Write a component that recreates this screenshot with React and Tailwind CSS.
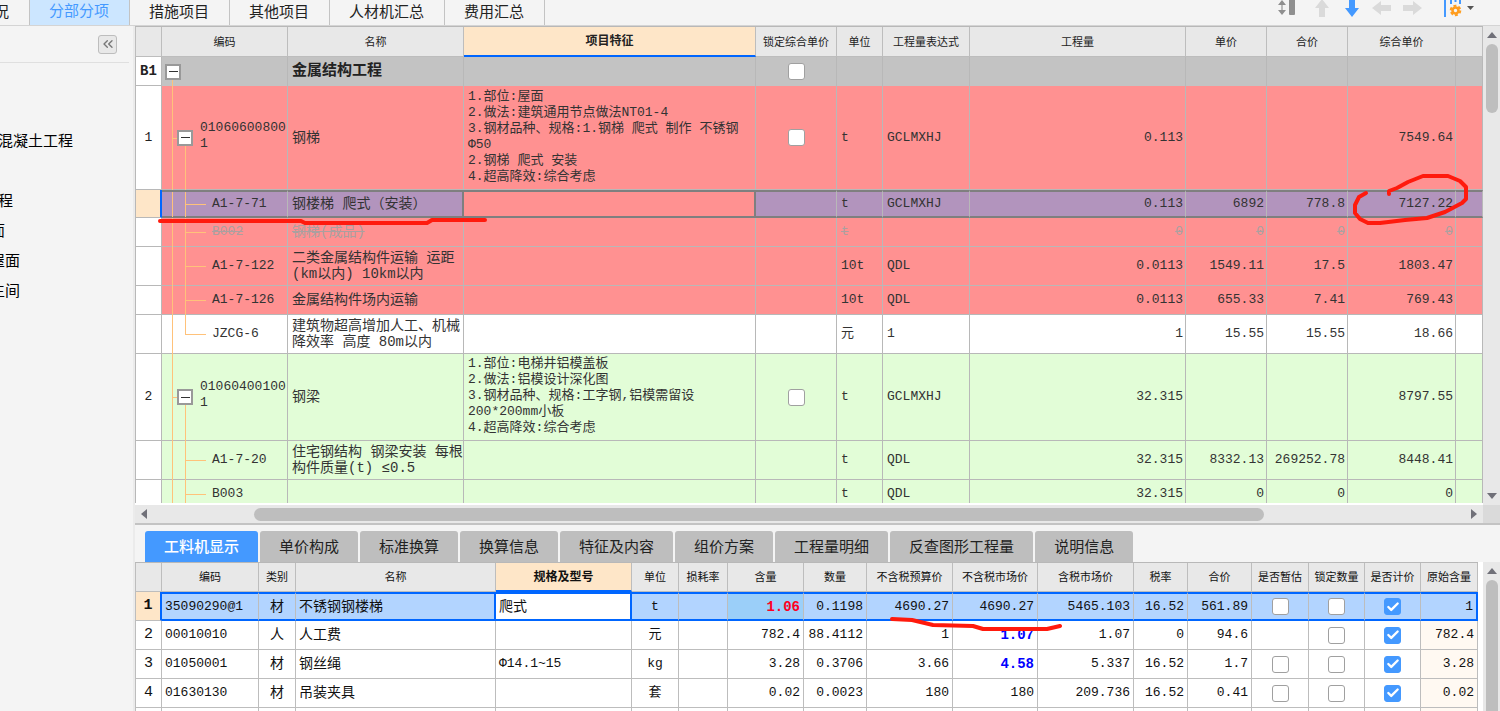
/**
 * Bill of quantities editor
 * Item grid on top, labour / material / machine detail grid below
 */

import React, { useState } from 'react';
import { Check, ChevronsLeft } from 'lucide-react';

const topTabs = ['分部分项', '措施项目', '其他项目', '人材机汇总', '费用汇总'];

const detailTabs = [
  '工料机显示',
  '单价构成',
  '标准换算',
  '换算信息',
  '特征及内容',
  '组价方案',
  '工程量明细',
  '反查图形工程量',
  '说明信息',
];

const navItems = [
  { label: '混凝土工程', indent: '-ml-0.5' },
  { label: '', indent: '' },
  { label: '程', indent: '-ml-0.5' },
  { label: '面', indent: '-ml-2.5' },
  { label: '屋面', indent: '-ml-2.5' },
  { label: '生间', indent: '-ml-2.5' },
];

const itemColumns = [
  { label: '', width: 'w-[27px]' },
  { label: '编码', width: 'w-[126px]' },
  { label: '名称', width: 'w-[176px]' },
  { label: '项目特征', width: 'w-[292px]', active: true },
  { label: '锁定综合单价', width: 'w-[81px]' },
  { label: '单位', width: 'w-[46px]' },
  { label: '工程量表达式', width: 'w-[87px]' },
  { label: '工程量', width: '' },
  { label: '单价', width: 'w-[81px]' },
  { label: '合价', width: 'w-[81px]' },
  { label: '综合单价', width: 'w-[108px]' },
  { label: '', width: 'w-[27px]' },
];

const items = [
  {
    no: '1',
    kind: 'item',
    tone: 'pink',
    height: 'h-[104px]',
    code: '010606008001',
    name: '钢梯',
    feature:
      '1.部位:屋面\n2.做法:建筑通用节点做法NT01-4\n3.钢材品种、规格:1.钢梯 爬式 制作 不锈钢\nΦ50\n2.钢梯 爬式 安装\n4.超高降效:综合考虑',
    unit: 't',
    expr: 'GCLMXHJ',
    qty: '0.113',
    total: '7549.64',
  },
  {
    kind: 'sub',
    tone: 'pink',
    selected: true,
    height: 'h-[28px]',
    code: 'A1-7-71',
    name: '钢楼梯 爬式（安装）',
    unit: 't',
    expr: 'GCLMXHJ',
    qty: '0.113',
    price: '6892',
    sum: '778.8',
    total: '7127.22',
  },
  {
    kind: 'sub',
    tone: 'pink',
    removed: true,
    height: 'h-[29px]',
    code: 'B002',
    name: '钢梯(成品)',
    unit: 't',
    qty: '0',
    price: '0',
    sum: '0',
    total: '0',
  },
  {
    kind: 'sub',
    tone: 'pink',
    height: 'h-[39px]',
    code: 'A1-7-122',
    name: '二类金属结构件运输 运距\n(km以内) 10km以内',
    unit: '10t',
    expr: 'QDL',
    qty: '0.0113',
    price: '1549.11',
    sum: '17.5',
    total: '1803.47',
  },
  {
    kind: 'sub',
    tone: 'pink',
    height: 'h-[29px]',
    code: 'A1-7-126',
    name: '金属结构件场内运输',
    unit: '10t',
    expr: 'QDL',
    qty: '0.0113',
    price: '655.33',
    sum: '7.41',
    total: '769.43',
  },
  {
    kind: 'sub',
    tone: 'white',
    last: true,
    height: 'h-[39px]',
    code: 'JZCG-6',
    name: '建筑物超高增加人工、机械\n降效率 高度 80m以内',
    unit: '元',
    expr: '1',
    qty: '1',
    price: '15.55',
    sum: '15.55',
    total: '18.66',
  },
  {
    no: '2',
    kind: 'item',
    tone: 'green',
    height: 'h-[87px]',
    code: '010604001001',
    name: '钢梁',
    feature:
      '1.部位:电梯井铝模盖板\n2.做法:铝模设计深化图\n3.钢材品种、规格:工字钢,铝模需留设\n200*200mm小板\n4.超高降效:综合考虑',
    unit: 't',
    expr: 'GCLMXHJ',
    qty: '32.315',
    total: '8797.55',
  },
  {
    kind: 'sub',
    tone: 'green',
    height: 'h-[39px]',
    code: 'A1-7-20',
    name: '住宅钢结构 钢梁安装 每根\n构件质量(t) ≤0.5',
    unit: 't',
    expr: 'QDL',
    qty: '32.315',
    price: '8332.13',
    sum: '269252.78',
    total: '8448.41',
  },
  {
    kind: 'sub',
    tone: 'green',
    height: 'h-[29px]',
    code: 'B003',
    name: '',
    unit: 't',
    expr: 'QDL',
    qty: '32.315',
    price: '0',
    sum: '0',
    total: '0',
  },
];

const tones = {
  pink: 'bg-[#ff9191]',
  white: 'bg-white',
  green: 'bg-[#e2fdd7]',
};

const detailColumns = [
  { key: 'no', label: '', width: 'w-[27px]' },
  { key: 'code', label: '编码', width: 'w-[97px]' },
  { key: 'type', label: '类别', width: 'w-[37px]' },
  { key: 'name', label: '名称', width: '' },
  { key: 'spec', label: '规格及型号', width: 'w-[136px]', active: true },
  { key: 'unit', label: '单位', width: 'w-[47px]' },
  { key: 'loss', label: '损耗率', width: 'w-[49px]' },
  { key: 'content', label: '含量', width: 'w-[76px]' },
  { key: 'qty', label: '数量', width: 'w-[63px]' },
  { key: 'budget', label: '不含税预算价', width: 'w-[86px]' },
  { key: 'market', label: '不含税市场价', width: 'w-[85px]' },
  { key: 'taxed', label: '含税市场价', width: 'w-[96px]' },
  { key: 'rate', label: '税率', width: 'w-[54px]' },
  { key: 'sum', label: '合价', width: 'w-[64px]' },
  { key: 'estimate', label: '是否暂估', width: 'w-[57px]' },
  { key: 'lock', label: '锁定数量', width: 'w-[56px]' },
  { key: 'priced', label: '是否计价', width: 'w-[56px]' },
  { key: 'origin', label: '原始含量', width: 'w-[57px]' },
];

const details = [
  { no: '1', code: '35090290@1', type: '材', name: '不锈钢钢楼梯', spec: '爬式', unit: 't', content: '1.06', qty: '0.1198', budget: '4690.27', market: '4690.27', taxed: '5465.103', rate: '16.52', sum: '561.89', estimate: true, origin: '1', selected: true },
  { no: '2', code: '00010010', type: '人', name: '人工费', spec: '', unit: '元', content: '782.4', qty: '88.4112', budget: '1', market: '1.07', taxed: '1.07', rate: '0', sum: '94.6', estimate: false, origin: '782.4', edited: true },
  { no: '3', code: '01050001', type: '材', name: '钢丝绳', spec: 'Φ14.1~15', unit: 'kg', content: '3.28', qty: '0.3706', budget: '3.66', market: '4.58', taxed: '5.337', rate: '16.52', sum: '1.7', estimate: true, origin: '3.28', edited: true },
  { no: '4', code: '01630130', type: '材', name: '吊装夹具', spec: '', unit: '套', content: '0.02', qty: '0.0023', budget: '180', market: '180', taxed: '209.736', rate: '16.52', sum: '0.41', estimate: true, origin: '0.02' },
];

const TickBox = ({ label, checked = false }) => {
  const [on, setOn] = useState(checked);

  return (
    <label className="mx-auto grid w-[17px] place-items-center">
      <input
        type="checkbox"
        aria-label={label}
        checked={on}
        onChange={() => setOn(!on)}
        className="peer [grid-area:1/1] size-[17px] appearance-none rounded-[3px] border border-[#a0a0a0] bg-white checked:border-[#4499ff] checked:bg-[#4499ff]"
      />
      <Check
        aria-hidden="true"
        strokeWidth={4}
        className="pointer-events-none hidden size-[14px] text-white [grid-area:1/1] peer-checked:block"
      />
    </label>
  );
};

const Collapse = ({ label, className }) => (
  <button
    aria-label={label}
    className={`absolute top-1/2 z-10 flex size-4 -translate-y-1/2 items-center justify-center border-2 border-[#999] bg-white ${className}`}
  >
    <span className="h-px w-[9px] bg-[#333]" />
  </button>
);

/* Connector lines of the code tree, drawn behind the cell text */
const TreeLines = ({ kind, last }) => (
  <span aria-hidden="true">
    <span className="absolute -bottom-px top-0 left-[10px] w-px bg-[#ffc27a]" />
    {kind === 'item' && (
      <>
        <span className="absolute top-1/2 left-[10px] h-px w-3 bg-[#ffc27a]" />
        <span className="absolute -bottom-px top-1/2 left-[23px] w-px bg-[#ffc27a]" />
      </>
    )}
    {kind === 'sub' && (
      <>
        <span
          className={`absolute top-0 left-[23px] w-px bg-[#ffc27a] ${last ? 'bottom-1/2' : '-bottom-px'}`}
        />
        <span className="absolute top-1/2 left-[23px] h-px w-[21px] bg-[#ffc27a]" />
      </>
    )}
  </span>
);

const Arrow = ({ dir }) => {
  const points = {
    up: '0,6 5,0 10,6',
    down: '0,0 10,0 5,6',
    left: '6,0 6,10 0,5',
    right: '0,0 6,5 0,10',
  };
  const vertical = dir === 'up' || dir === 'down';

  return (
    <svg width={vertical ? 10 : 6} height={vertical ? 6 : 10} aria-hidden="true">
      <polygon points={points[dir]} fill="#707078" />
    </svg>
  );
};

const VerticalScroll = ({ thumb, clipped }) => (
  <div className="flex w-[17px] shrink-0 flex-col items-center bg-[#e8e8e8]">
    <button aria-label="向上滚动" className="flex h-[18px] shrink-0 items-center">
      <Arrow dir="up" />
    </button>
    <div className="flex min-h-0 w-full flex-1 flex-col items-center overflow-hidden">
      <div className={`w-3 shrink-0 bg-[#bebebe] ${thumb}`} />
    </div>
    {!clipped && (
      <button aria-label="向下滚动" className="flex h-[18px] shrink-0 items-center">
        <Arrow dir="down" />
      </button>
    )}
  </div>
);

const Toolbar = () => (
  <div className="ml-auto flex items-start pr-2.5">
    <button aria-label="行高" className="flex w-10 justify-center">
      <svg width="18" height="17" aria-hidden="true">
        <path d="M4 0 L8 5 H0 Z M0 10 H8 L4 15 Z" fill="#8f8f8f" />
        <path d="M4 5 V10" stroke="#bbb" strokeWidth="2" />
        <rect x="11" y="-3" width="6" height="18" rx="1" fill="#8f8f8f" />
      </svg>
    </button>
    <button aria-label="上移" className="flex w-[30px] justify-center">
      <svg width="14" height="18" aria-hidden="true">
        <path d="M7 -1 L14 8 H10 V17 H4 V8 H0 Z" fill="#dadada" />
      </svg>
    </button>
    <button aria-label="下移" className="flex w-[30px] justify-center">
      <svg width="14" height="18" aria-hidden="true">
        <path d="M4 0 H10 V8 H14 L7 17 L0 8 H4 Z" fill="#4499ff" />
      </svg>
    </button>
    <button aria-label="左移" className="flex w-[30px] justify-center">
      <svg width="20" height="17" aria-hidden="true">
        <path d="M0 8 L9 1 V5 H19 V11 H9 V15 Z" fill="#dadada" />
      </svg>
    </button>
    <button aria-label="右移" className="flex w-[30px] justify-center">
      <svg width="20" height="17" aria-hidden="true">
        <path d="M20 8 L11 1 V5 H1 V11 H11 V15 Z" fill="#dadada" />
      </svg>
    </button>
    <button aria-label="列设置" className="flex w-[63px] justify-center gap-[5px]">
      <svg width="18" height="18" aria-hidden="true">
        <path d="M1 0 V17" stroke="#4499ff" strokeWidth="2" />
        <path d="M7 0 V4 M11.5 0 V2 M16 0 V4" stroke="#4499ff" strokeWidth="2" />
        <circle cx="11.5" cy="10.5" r="3" fill="none" stroke="#ff9d1e" strokeWidth="2.6" />
        <circle
          cx="11.5"
          cy="10.5"
          r="4.8"
          fill="none"
          stroke="#ff9d1e"
          strokeWidth="2"
          strokeDasharray="2.9 2.1"
        />
      </svg>
      <svg width="7" height="12" aria-hidden="true">
        <path d="M0 6 H7 L3.5 10 Z" fill="#555" />
      </svg>
    </button>
  </div>
);

const ItemHeader = ({ label, active, first }) => (
  <th
    scope="col"
    aria-label={label || '空'}
    className={`border-r border-[#bdbdbd] px-0 pt-0.5 pb-0 text-center ${first ? 'border-l' : ''} ${
      active
        ? 'border-b-2 border-b-[#0066ff] bg-[#fee6c8] text-xs font-bold'
        : 'border-b bg-[#e8e8e8] text-[11px] font-normal'
    }`}
  >
    {label}
  </th>
);

const ItemRow = ({ row }) => {
  const edge = row.selected ? 'border-y-2 border-y-[#7f7f7f]' : 'border-b border-b-[#b8b8b8]';
  const bg = row.selected ? 'bg-[#b294bd]' : tones[row.tone];
  const text = row.removed ? 'text-[#aaa0a0] line-through' : 'text-[#333]';
  const cell = `border-r border-r-[#b8b8b8] px-1 py-0 ${edge} ${bg} ${text}`;
  const number = `border-r border-r-[#b8b8b8] py-0 pr-0.5 pl-0 text-right ${edge} ${bg} ${text}`;
  const frame = row.selected ? 'border-r-2 border-r-[#7f7f7f]' : 'border-r border-r-[#b8b8b8]';

  return (
    <tr className={row.height}>
      <th
        scope="row"
        aria-label={row.no || row.code}
        className={`border-b border-l border-[#b8b8b8] p-0 text-center font-normal ${
          row.selected ? 'border-r-2 border-r-[#0066ff] bg-[#fee6c8]' : 'border-r bg-white'
        }`}
      >
        {row.no}
      </th>
      <td
        className={`relative border-r border-r-[#b8b8b8] pt-0 pr-0 break-all ${edge} ${bg} ${text} ${
          row.kind === 'item' ? 'pb-1 pl-[38px]' : 'pb-0 pl-[50px]'
        }`}
      >
        <TreeLines kind={row.kind} last={row.last} />
        {row.kind === 'item' && <Collapse label={`收起 ${row.name}`} className="left-[15px]" />}
        {row.code}
      </td>
      <td className={`px-1 py-0 text-sm leading-4 whitespace-pre ${frame} ${edge} ${bg} ${text}`}>
        {row.name}
      </td>
      <td className={`px-1 pt-0 pb-0.5 whitespace-pre ${frame} ${edge} ${tones[row.tone]} ${text}`}>
        {row.feature}
      </td>
      <td className={cell}>{row.kind === 'item' && <TickBox label={`锁定综合单价 ${row.name}`} />}</td>
      <td className={cell}>{row.unit}</td>
      <td className={cell}>{row.expr}</td>
      <td className={number}>{row.qty}</td>
      <td className={number}>{row.price}</td>
      <td className={number}>{row.sum}</td>
      <td className={number}>{row.total}</td>
      <td className={cell} />
    </tr>
  );
};

const ItemTable = () => (
  <table className="w-full table-fixed border-separate border-spacing-0 border-t border-[#b8b8b8] text-[13px] leading-4">
    <colgroup>
      {itemColumns.map((column, i) => (
        <col key={i} className={column.width} />
      ))}
    </colgroup>
    <thead>
      <tr className="h-[30px]">
        {itemColumns.map((column, i) => (
          <ItemHeader key={i} label={column.label} active={column.active} first={i === 0} />
        ))}
      </tr>
    </thead>
    <tbody>
      <tr className="h-[29px] bg-[#c3c3c3]">
        <th scope="row" className="border-x border-b border-[#b8b8b8] bg-white p-0 text-center text-sm font-bold">
          B1
        </th>
        <td className="relative border-r border-[#b8b8b8] p-0">
          <Collapse label="收起 金属结构工程" className="left-[3px]" />
          <span className="absolute bottom-0 left-[10px] h-2 w-px bg-[#ffc27a]" />
        </td>
        <td className="border-r border-[#b8b8b8] px-1 py-0 text-[15px] font-bold">金属结构工程</td>
        <td className="border-r border-[#b8b8b8] p-0" />
        <td className="border-r border-[#b8b8b8] p-0">
          <TickBox label="锁定综合单价 金属结构工程" />
        </td>
        {itemColumns.slice(5).map((column, i) => (
          <td key={i} className="border-r border-[#b8b8b8] p-0" />
        ))}
      </tr>
      {items.map((row) => (
        <ItemRow key={row.code} row={row} />
      ))}
    </tbody>
  </table>
);

const alignments = {
  code: 'pl-[3px]',
  name: 'pl-[3px] text-sm',
  spec: 'pl-[3px]',
  type: 'text-center text-sm',
  unit: 'text-center',
  estimate: 'text-center',
  lock: 'text-center',
  priced: 'text-center',
};

const DetailCell = ({ column, row }) => {
  const { key, label } = column;
  const align = alignments[key] || 'pr-[3px] text-right';

  let bg = 'bg-white';
  if (row.selected && key === 'content') bg = 'bg-[#9bcff9]';
  else if (row.selected && key !== 'spec') bg = 'bg-[#b2d4ff]';
  else if (key === 'origin') bg = 'bg-[#fff9f2]';

  let text = '';
  if (row.selected && key === 'content') text = 'text-sm font-bold text-[#ff0022]';
  else if (row.edited && key === 'market') text = 'text-sm font-bold text-[#0000ff]';

  let edge = 'border-b border-r border-[#bdbdbd]';
  if (row.selected) {
    edge = ['name', 'spec', 'origin'].includes(key)
      ? 'border-y-2 border-r-2 border-[#0066ff]'
      : 'border-y-2 border-r border-y-[#0066ff] border-r-[#bdbdbd]';
  }

  let content = row[key];
  if (key === 'estimate') content = row.estimate && <TickBox label={`${label} ${row.name}`} />;
  if (key === 'lock') content = <TickBox label={`${label} ${row.name}`} />;
  if (key === 'priced') content = <TickBox label={`${label} ${row.name}`} checked />;
  if (key === 'spec' && row.selected) {
    content = (
      <input
        type="text"
        aria-label={`${label} ${row.name}`}
        defaultValue={row.spec}
        className="block h-5 w-full bg-white text-sm outline-none"
      />
    );
  }

  return <td className={`py-0 ${edge} ${bg} ${align} ${text}`}>{content}</td>;
};

const DetailTable = () => (
  <table className="w-full table-fixed border-separate border-spacing-0 border-t border-[#b8b8b8] text-[13px] leading-4">
    <colgroup>
      {detailColumns.map((column) => (
        <col key={column.key} className={column.width} />
      ))}
    </colgroup>
    <thead>
      <tr className="h-[29px]">
        {detailColumns.map((column, i) => (
          <ItemHeader key={column.key} label={column.label} active={column.active} first={i === 0} />
        ))}
      </tr>
    </thead>
    <tbody>
      {details.map((row) => (
        <tr key={row.no} className="h-[29px]">
          <th
            scope="row"
            className={`border-b border-l border-[#bdbdbd] p-0 text-center text-[15px] ${
              row.selected
                ? 'border-r-2 border-r-[#0066ff] bg-[#fee6c8] font-bold'
                : 'border-r bg-white font-normal'
            }`}
          >
            {row.no}
          </th>
          {detailColumns.slice(1).map((column) => (
            <DetailCell key={column.key} column={column} row={row} />
          ))}
        </tr>
      ))}
      <tr className="h-[29px]">
        {detailColumns.map((column, i) => (
          <td
            key={column.key}
            className={`border-r border-[#bdbdbd] p-0 ${i === 0 ? 'border-l' : ''} ${
              column.key === 'origin' ? 'bg-[#fff9f2]' : 'bg-white'
            }`}
          />
        ))}
      </tr>
    </tbody>
  </table>
);

/* Freehand review marks over the grids */
const Marks = () => (
  <svg
    aria-hidden="true"
    className="pointer-events-none absolute inset-0 z-20 size-full"
    fill="none"
    stroke="#ff1a0d"
    strokeWidth="4"
    strokeLinecap="round"
    strokeLinejoin="round"
  >
    <path d="M160 221 H301 L305 223 H427 L432 220 H485" />
    <path d="M1366 193 L1359 197 L1355 205 V213 L1360 219 L1368 223 H1380 L1405 220 L1427 218 L1445 212 L1462 203 L1466 199 V187 L1460 181 L1448 176 H1423 L1408 182 L1397 188 L1389 191 V194" />
    <path d="M892 619 L912 620 L933 625 L973 626 L983 629 H1047 L1060 626" />
  </svg>
);

export default function App() {
  const [detailTab, setDetailTab] = useState('工料机显示');

  return (
    <div className="relative flex h-screen flex-col overflow-hidden bg-[#f4f4f4] font-['Liberation_Mono','Noto_Sans_CJK_SC',monospace] text-[#222]">
      <header className="flex h-[26px] shrink-0 items-stretch border-b border-[#d4d4d4]">
        <nav className="flex font-['Noto_Sans_CJK_SC',sans-serif] text-[15px]">
          <button className="flex w-[30px] items-start justify-end border-r border-[#c3c3c3] pr-5 leading-[22px]">
            况
          </button>
          {topTabs.map((tab, i) => (
            <button
              key={tab}
              className={`flex items-start border-r border-[#c3c3c3] pr-5 pl-[19px] whitespace-nowrap ${
                i === 0 ? 'bg-[#cce6ff] leading-5 text-[#4499ff]' : 'leading-[22px]'
              }`}
            >
              {tab}
            </button>
          ))}
        </nav>
        <Toolbar />
      </header>

      <div className="flex min-h-0 flex-1">
        <aside className="w-[135px] shrink-0 overflow-hidden border-r-2 border-[#ebebeb] font-['Noto_Sans_CJK_SC',sans-serif] text-[15px] text-black">
          <div className="mr-1 flex h-[37px] items-center justify-end border-b border-[#dfdfdf] pr-3">
            <button
              aria-label="收起导航"
              className="flex size-[19px] items-center justify-center rounded-[3px] border border-[#bdbdbd] bg-[#e8e8e8]"
            >
              <ChevronsLeft className="size-4 text-[#777]" strokeWidth={2} />
            </button>
          </div>
          <ul className="mt-[62px]">
            {navItems.map((item, i) => (
              <li key={i} className={`flex h-[30px] items-center ${item.indent}`}>
                {item.label && <button>{item.label}</button>}
              </li>
            ))}
          </ul>
        </aside>

        <main className="flex min-w-0 flex-1 flex-col">
          <section className="flex min-h-0 flex-1 flex-col border-b-2 border-[#c3c3c3]">
            <div className="flex min-h-0 flex-1">
              <div className="min-w-0 flex-1 overflow-hidden border-b-2 border-white">
                <ItemTable />
              </div>
              <VerticalScroll thumb="h-[69px] rounded-full" />
            </div>
            <div className="flex h-[18px] shrink-0 items-center bg-[#e8e8e8]">
              <button aria-label="向左滚动" className="flex w-[18px] justify-center">
                <Arrow dir="left" />
              </button>
              <div className="flex-1">
                <div className="ml-[101px] h-[13px] w-[77%] rounded-full bg-[#bebebe]" />
              </div>
              <button aria-label="向右滚动" className="flex w-[18px] justify-center">
                <Arrow dir="right" />
              </button>
              <div className="w-[17px] self-stretch bg-[#dadada]" />
            </div>
          </section>

          <section className="flex h-[186px] shrink-0 flex-col">
            <div
              role="tablist"
              className="flex shrink-0 gap-0.5 pt-1.5 pl-2.5 font-['Noto_Sans_CJK_SC',sans-serif] text-[15px]"
            >
              {detailTabs.map((tab) => (
                <button
                  key={tab}
                  role="tab"
                  aria-selected={tab === detailTab}
                  onClick={() => setDetailTab(tab)}
                  className={`h-[31px] rounded-t-[3px] px-[19px] whitespace-nowrap ${
                    tab === detailTab ? 'bg-[#4499ff] font-medium text-white' : 'bg-[#bebebe] text-[#222]'
                  }`}
                >
                  {tab}
                </button>
              ))}
            </div>
            <div className="flex min-h-0 flex-1">
              <div className="min-w-0 flex-1 overflow-hidden bg-white pr-[5px] text-[#111]">
                <DetailTable />
              </div>
              <VerticalScroll thumb="h-full rounded-t-full" clipped />
            </div>
          </section>
        </main>
      </div>

      <Marks />
    </div>
  );
}
